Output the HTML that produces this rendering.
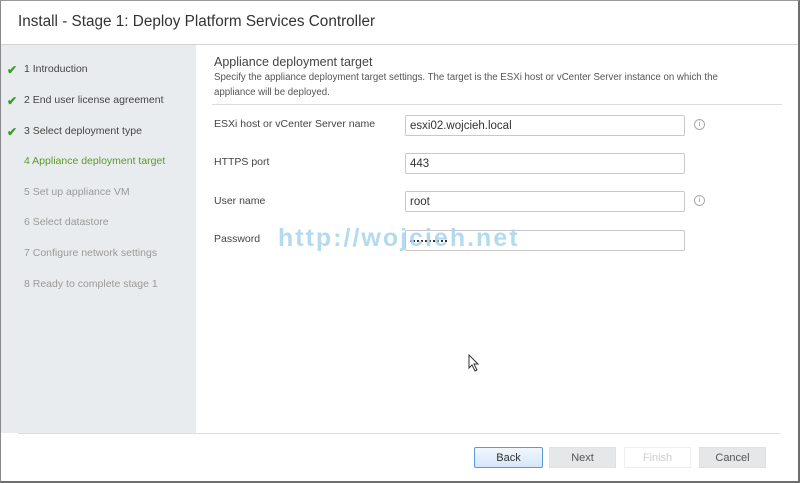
<!DOCTYPE html>
<html><head><style>
body{margin:0;width:800px;height:483px;overflow:hidden;background:#fff;font-family:"Liberation Sans",Arial,sans-serif;position:relative}
.frame{position:absolute;left:0;top:0;border-left:1px solid #8a8a8a;border-top:1px solid #9a9a9a;border-right:2px solid #6e6e6e;border-bottom:2px solid #6e6e6e;box-sizing:border-box;width:800px;height:483px}
.title{position:absolute;left:18px;top:13px;font-size:15.3px;color:#333}
.hline{position:absolute;left:1px;right:2px;top:44px;height:1px;background:#d4d4d4}
.side{position:absolute;left:1px;top:45px;width:195px;height:388px;background:#e9ecee}
.step{position:absolute;left:24px;font-size:10.5px;color:#444}
.step.g{color:#5a9a2a}.step.d{color:#999}
.chk{position:absolute;left:7px;color:#3c9a2c;font-size:12px;font-weight:bold}
.h2{position:absolute;left:214px;top:55px;font-size:12.5px;color:#444}
.desc{position:absolute;left:214px;top:70px;width:545px;font-size:9.7px;line-height:15px;color:#555}
.sep{position:absolute;left:212px;width:570px;top:104px;height:1px;background:#ddd}
.lbl{position:absolute;left:214px;font-size:10.5px;color:#444}
.inp{position:absolute;left:405px;width:280px;height:21px;border:1px solid #c8c8c8;border-radius:2px;box-sizing:border-box;font-size:11.5px;color:#333;padding:4px 4px 2px}
.info{position:absolute;left:694px;width:9px;height:9px;border:1px solid #aaa;border-radius:50%;font-size:7px;color:#888;text-align:center;line-height:9px}
.wm{position:absolute;left:278px;top:224px;font-size:25px;color:#a8d4ea;opacity:.85;letter-spacing:2px;font-weight:bold}
.fline{position:absolute;left:18px;width:762px;top:433px;height:1px;background:#ddd}
.btn{position:absolute;top:447px;height:21px;width:67px;box-sizing:border-box;font-size:11px;text-align:center;line-height:21px;color:#555;background:#e5e7e8;border:1px solid #e0e0e0}
.dots{position:absolute;left:410px;top:240px;width:37px;border-top:2px dotted #333}
</style></head><body>
<div class="frame"></div>
<div class="title">Install - Stage 1: Deploy Platform Services Controller</div>
<div class="hline"></div>
<div class="side"></div>
<div class="chk" style="top:63px">✔</div><div class="step" style="top:63px">1 Introduction</div>
<div class="chk" style="top:94px">✔</div><div class="step" style="top:94px">2 End user license agreement</div>
<div class="chk" style="top:125px">✔</div><div class="step" style="top:125px">3 Select deployment type</div>
<div class="step g" style="top:155px">4 Appliance deployment target</div>
<div class="step d" style="top:186px">5 Set up appliance VM</div>
<div class="step d" style="top:216px">6 Select datastore</div>
<div class="step d" style="top:247px">7 Configure network settings</div>
<div class="step d" style="top:278px">8 Ready to complete stage 1</div>
<div class="h2">Appliance deployment target</div>
<div class="desc">Specify the appliance deployment target settings. The target is the ESXi host or vCenter Server instance on which the appliance will be deployed.</div>
<div class="sep"></div>
<div class="lbl" style="top:118px">ESXi host or vCenter Server name</div>
<div class="inp" style="top:115px">esxi02.wojcieh.local</div><div class="info" style="top:119px">i</div>
<div class="lbl" style="top:156px">HTTPS port</div>
<div class="inp" style="top:153px">443</div>
<div class="lbl" style="top:195px">User name</div>
<div class="inp" style="top:191px">root</div><div class="info" style="top:195px">i</div>
<div class="lbl" style="top:233px">Password</div>
<div class="inp" style="top:230px"></div>
<div class="dots"></div>
<div class="wm">http://wojcieh.net</div>
<svg style="position:absolute;left:468px;top:354px" width="12" height="18" viewBox="0 0 12 18"><path d="M1 1 L1 14 L4 11 L7 17 L9 16 L6 10 L10 10 Z" fill="#fff" stroke="#333" stroke-width="1"/></svg>
<div class="fline"></div>
<div class="btn" style="left:474px;width:69px;background:linear-gradient(#f2f7fd,#d6e6f8);border:1px solid #5a9ad6;border-radius:2px;color:#333">Back</div>
<div class="btn" style="left:549px">Next</div>
<div class="btn" style="left:624px;background:#fff;border-color:#eee;color:#ccc">Finish</div>
<div class="btn" style="left:699px">Cancel</div>
</body></html>
